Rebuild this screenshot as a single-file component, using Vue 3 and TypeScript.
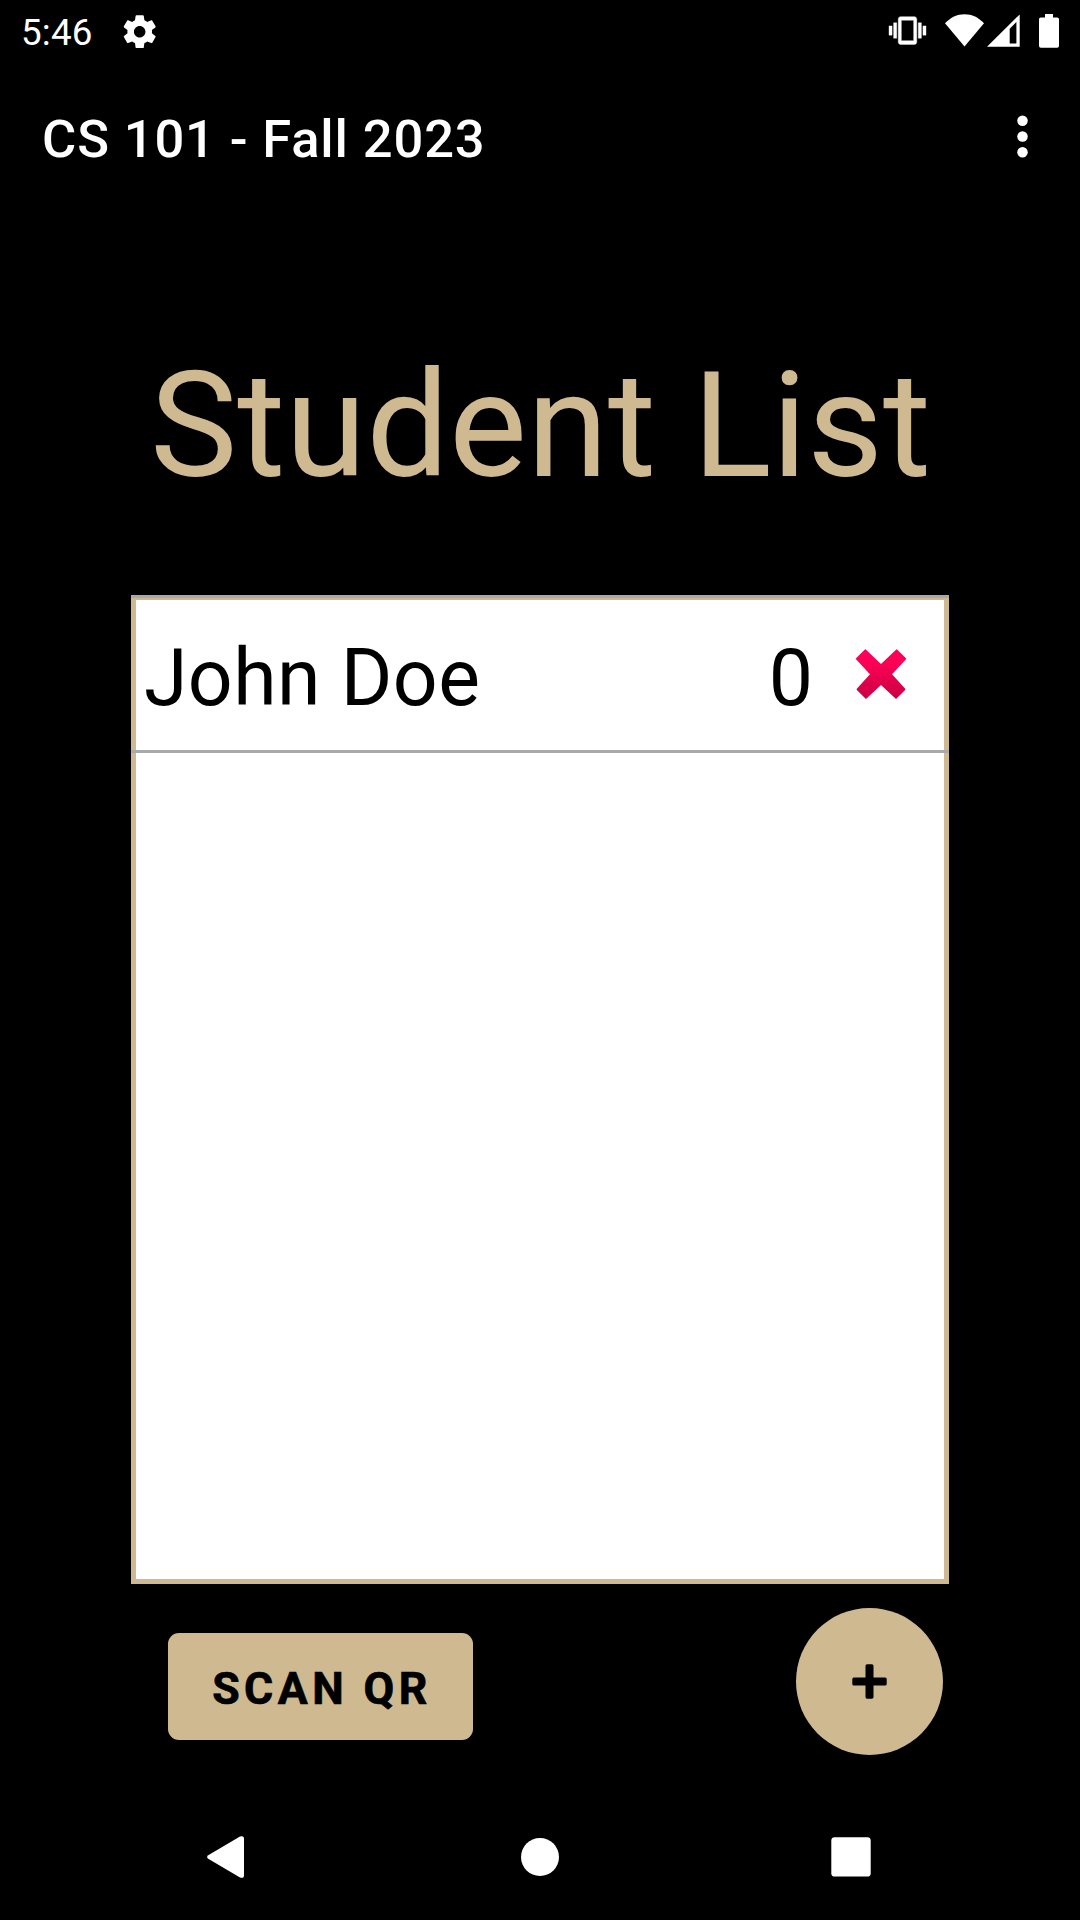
<script setup lang="ts">
interface Student {
  name: string
  score: number
}

const clock = '5:46'
const course = 'CS 101 - Fall 2023'
const students: Student[] = [{ name: 'John Doe', score: 0 }]
</script>

<template>
  <div class="screen">
    <header class="status">
      <span class="clock">{{ clock }}</span>
      <svg class="gear" viewBox="0 0 24 24" fill="#fff">
        <path d="M19.43 12.98c.04-.32.07-.64.07-.98s-.03-.66-.07-.98l2.11-1.65c.19-.15.24-.42.12-.64l-2-3.46c-.12-.22-.39-.3-.61-.22l-2.49 1c-.52-.4-1.08-.73-1.69-.98l-.38-2.65C14.46 2.18 14.25 2 14 2h-4c-.25 0-.46.18-.49.42l-.38 2.65c-.61.25-1.17.59-1.69.98l-2.49-1c-.23-.09-.49 0-.61.22l-2 3.46c-.13.22-.07.49.12.64l2.11 1.65c-.04.32-.07.65-.07.98s.03.66.07.98l-2.11 1.65c-.19.15-.24.42-.12.64l2 3.46c.12.22.39.3.61.22l2.49-1c.52.4 1.08.73 1.69.98l.38 2.65c.03.24.24.42.49.42h4c.25 0 .46-.18.49-.42l.38-2.65c.61-.25 1.17-.59 1.69-.98l2.49 1c.23.09.49 0 .61-.22l2-3.46c.12-.22.07-.49-.12-.64l-2.11-1.65zM12 15.5c-1.93 0-3.5-1.57-3.5-3.5s1.57-3.5 3.5-3.5 3.5 1.57 3.5 3.5-1.57 3.5-3.5 3.5z" />
      </svg>
      <div class="indicators">
        <svg class="vibrate" width="37" height="37" viewBox="0 0 24 24" fill="#fff" stroke="#fff" stroke-width="0.25">
          <path d="M0 15h2V9H0v6zm3 2h2V7H3v10zm19-8v6h2V9h-2zm-3 8h2V7h-2v10zM16.5 3h-9C6.67 3 6 3.67 6 4.5v15c0 .83.67 1.5 1.5 1.5h9c.83 0 1.5-.67 1.5-1.5v-15c0-.83-.67-1.5-1.5-1.5zM16 18.6H8V5.4h8v13.2z" />
        </svg>
        <svg class="wifi" width="39" height="33" viewBox="0 0 39 33" fill="#fff">
          <path d="M0 9.2C5.6 3.4 12 .2 19.5.2S33.4 3.4 39 9.2L19.5 32.6z" />
        </svg>
        <svg class="signal" width="33" height="33" viewBox="0 0 33 33" fill="#fff">
          <path fill-rule="evenodd" d="M0 32.8 32.7.4V32.8zM22.7 14.7V29.6H29.4V8z" />
        </svg>
        <svg class="battery" width="20" height="34" viewBox="0 0 20 34" fill="#fff">
          <path d="M6 0h8v3.4h4.2Q20 3.4 20 5.2V31.8Q20 33.7 18.2 33.7H1.8Q0 33.7 0 31.8V5.2Q0 3.4 1.8 3.4H6z" />
        </svg>
      </div>
    </header>

    <div class="appbar">
      <span class="course">{{ course }}</span>
      <svg width="63" height="63" viewBox="0 0 24 24" fill="#fff">
        <circle cx="12" cy="6" r="2" />
        <circle cx="12" cy="12" r="2" />
        <circle cx="12" cy="18" r="2" />
      </svg>
    </div>

    <h1 class="title">Student List</h1>

    <main class="list">
      <div v-for="s in students" :key="s.name" class="row">
        <span class="name">{{ s.name }}</span>
        <span class="score">{{ s.score }}</span>
        <svg class="remove" width="52" height="51" viewBox="0 0 52 51">
          <defs>
            <linearGradient id="remove-fill" x1="0" y1="0" x2="0" y2="1">
              <stop offset="0" stop-color="#ff005c" />
              <stop offset="0.3" stop-color="#fb0055" />
              <stop offset="1" stop-color="#c90043" />
            </linearGradient>
          </defs>
          <path
            d="M10.2 1.2 26 16 41.8 1.2 50.4 9.8 36 25.3 49.6 40.4 41 49 26 35 11 49 2.4 40.4 16 25.3 1.6 9.8z"
            fill="url(#remove-fill)"
            stroke="url(#remove-fill)"
            stroke-width="1.6"
            stroke-linejoin="round"
          />
        </svg>
      </div>
    </main>

    <div class="actions">
      <button class="scan">SCAN QR</button>
      <button class="fab" aria-label="Add student">
        <svg width="35" height="35" viewBox="0 0 35 35">
          <rect x="13.5" y="0.3" width="8" height="34.4" rx="1.6" />
          <rect x="0.3" y="13.5" width="34.4" height="8" rx="1.6" />
        </svg>
      </button>
    </div>

    <nav class="nav">
      <svg width="38" height="42" viewBox="0 0 38 42" fill="#fff">
        <path d="M1.2 19.2 33 .6Q37 -1 37 3V39Q37 43 33 41.4L1.2 22.8Q-1 21 1.2 19.2z" />
      </svg>
      <svg class="home" width="40" height="40" viewBox="0 0 40 40" fill="#fff">
        <circle cx="20" cy="20" r="19" />
      </svg>
      <svg width="40" height="40" viewBox="0 0 40 40" fill="#fff">
        <rect x="0.3" y="0.2" width="39.4" height="39.4" rx="3.4" />
      </svg>
    </nav>
  </div>
</template>

<style>
body {
  margin: 0;
  background: #000;
}
</style>

<style scoped>
.screen {
  width: 1080px;
  height: 1920px;
  display: flex;
  flex-direction: column;
  background: #000;
  color: #fff;
  font-family: Roboto, sans-serif;
  overflow: hidden;
}
svg {
  display: block;
  flex: none;
}
.status {
  height: 63px;
  display: flex;
  align-items: flex-start;
  padding: 0 21px;
  box-sizing: border-box;
}
.clock {
  width: 99px;
  font-size: 36.75px;
  line-height: 66px;
  letter-spacing: 0.2px;
}
.gear {
  width: 39.4px;
  height: 39.4px;
  margin-top: 12px;
}
.indicators {
  display: flex;
  margin-left: auto;
}
.vibrate {
  overflow: visible;
  margin: 12px 19.5px 0 0;
}
.wifi {
  margin: 14px 3.3px 0 0;
}
.signal {
  margin: 14px 18.7px 0 0;
}
.battery {
  margin-top: 14px;
}
.appbar {
  height: 147px;
  display: flex;
  align-items: center;
  justify-content: space-between;
  padding: 0 26px 0 42px;
}
.course {
  font-size: 52.5px;
  font-weight: 500;
  line-height: 60px;
  letter-spacing: 0.86px;
  padding-top: 5px;
  white-space: nowrap;
}
.title {
  margin: 116px 0 69px;
  padding-left: 1px;
  text-align: center;
  font-size: 147px;
  line-height: 200px;
  font-weight: 400;
  letter-spacing: -0.08px;
  color: #cfb991;
  white-space: nowrap;
}
.list {
  width: 818px;
  height: 989px;
  margin: 0 auto;
  box-sizing: border-box;
  background: #fff;
  border: 5px solid #cfb991;
}
.row {
  height: 158px;
  margin: -5px -5px 0;
  padding: 0 42px 0 13px;
  box-sizing: border-box;
  display: flex;
  align-items: center;
  border-top: 3px solid #a9a9a9;
  border-bottom: 3px solid #a9a9a9;
  box-shadow: inset 5px 0 #cfb991, inset -5px 0 #cfb991, inset 0 2px #cfb991;
  color: #000;
  font-size: 78.75px;
  line-height: 92px;
}
.name {
  flex: 1;
  padding-top: 8px;
  letter-spacing: 0.4px;
}
.score {
  padding-top: 8px;
  margin-right: 42px;
}
.actions {
  display: flex;
  justify-content: space-between;
  align-items: center;
  height: 147px;
  margin: 24px 137px 0 168px;
}
button {
  border: 0;
  padding: 0;
  background: #cfb991;
  color: #000;
  font-family: inherit;
}
.scan {
  width: 305px;
  height: 107px;
  margin-top: 10px;
  padding: 4px 0 0 3px;
  border-radius: 11px;
  font-size: 44.6px;
  font-weight: 700;
  letter-spacing: 4.45px;
  -webkit-text-stroke: 0.7px #000;
}
.fab {
  width: 147px;
  height: 147px;
  border-radius: 50%;
  display: flex;
  align-items: center;
  justify-content: center;
}
.nav {
  height: 126px;
  margin-top: auto;
  padding: 0 209px 0 207px;
  display: flex;
  align-items: center;
  justify-content: space-between;
}
.home {
  margin-left: 4px;
}
</style>
